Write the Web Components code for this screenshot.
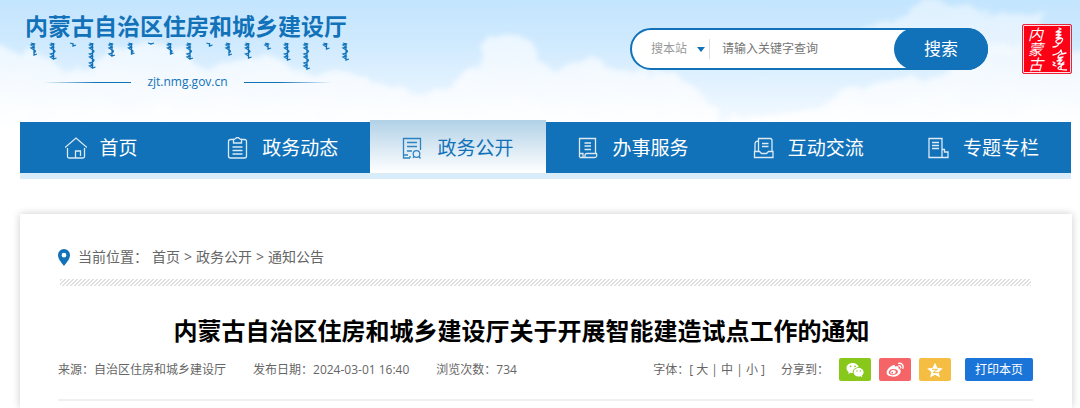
<!DOCTYPE html>
<html lang="zh-CN">
<head>
<meta charset="utf-8">
<meta name="viewport" content="width=device-width, initial-scale=1">
<title>内蒙古自治区住房和城乡建设厅</title>
<style>
  body {
    margin: 0;
    background: #fff;
    color: #666;
    font-family: "Open Sans", "Noto Sans CJK SC", sans-serif;
    font-size: 12px;
    line-height: 20px;
    --blue: #1172b9;
  }
</style>
</head>
<body>
<site-page>
  <site-header slot="header">
    <site-logo domain="zjt.nmg.gov.cn">内蒙古自治区住房和城乡建设厅</site-logo>
    <site-search></site-search>
    <site-seal></site-seal>
  </site-header>
  <site-nav slot="nav">
    <nav-item icon="home">首页</nav-item>
    <nav-item icon="clipboard">政务动态</nav-item>
    <nav-item icon="open" active>政务公开</nav-item>
    <nav-item icon="service">办事服务</nav-item>
    <nav-item icon="inbox">互动交流</nav-item>
    <nav-item icon="topic">专题专栏</nav-item>
  </site-nav>
  <article-card>
    <bread-crumb slot="crumb">
      <a href="#">首页</a>
      <a href="#">政务公开</a>
      <a href="#">通知公告</a>
    </bread-crumb>
    <span slot="title">内蒙古自治区住房和城乡建设厅关于开展智能建造试点工作的通知</span>
    <article-meta slot="meta" source="自治区住房和城乡建设厅" date="2024-03-01 16:40" views="734"></article-meta>
  </article-card>
</site-page>

<script>
// column heights of the vertical script band under the logo
const SCRIPT_BAND = [15, 19, 6, 28, 16, 14, 4, 14, 19, 6, 15, 18, 9, 20, 29, 9, 20];

const NAV_ICONS = {
  home: '<path d="M0 10.500 11 1l11 9.500"/><path d="M2.500 11v8.500q0 1.500 1.500 1.500h14q1.500 0 1.500-1.500V11"/><path d="M10.500 21v-7h5v5"/>',
  clipboard: '<path d="M7 2.500H3.500Q1.500 2.500 1.500 4.500v14.500q0 2 2 2h14q2 0 2-2V4.500q0-2-2-2H14"/><path d="M6.500 2.500q1.500 0 2-1 2-2 4 0 .5 1 2 1V6h-8zM5.500 10h10M5.500 13.500h10M5.500 17h10"/>',
  open: '<path d="M8 21H1.500V1.500h17V13"/><path d="M5 5.500h10M5 9.500h10M5 14h5M1.500 18H6"/><circle cx="14.500" cy="17" r="3.300"/><path d="M8 21v-2M17 19.500l1.500 2M12 19.500l-1 1.500"/>',
  service: '<path d="M1.500 20V1.500h16V16"/><path d="M6.500 6H13M6.500 9H13M6.500 12.500H13M1.500 16.500H5v4H1.500M5 20.500h11.500q3 0 2-4H9q-2 0-2 2v2"/>',
  inbox: '<path d="M5.500 14V1.500H17q2 0 2 2V14M5.500 4q-3.500 0-3.500 3V14"/><path d="M9 6.500h6.500M9 9.500h6.500M1.500 20.500v-6h5l2 2h5l2-2H20v6z"/>',
  topic: '<path d="M1 20.500v-19h13v19zM4 5.500h7M4 8.500h7M4 11.500h7M14 12.500h2.500V15h3.500v5.500h-6"/>'
};

const SHARE_ICONS = {
  wechat: '<path fill-rule="evenodd" d="M6.800 1C3 1 .5 3.200.5 6c0 1.600.8 3 2.200 3.900L2.200 12l2.300-1.200c.8.200 1.500.3 2.300.3C6.300 7.600 9 5.200 12.800 5.200 12.200 2.800 9.700 1 6.800 1zM4.600 3.500a.8.800 0 1 1 0 1.700.8.800 0 0 1 0-1.700zm4.400 0a.8.800 0 1 1 0 1.700.8.800 0 0 1 0-1.700z"/><path fill-rule="evenodd" d="M12.600 6c-3 0-5 1.900-5 4.200s2 4.300 5 4.300c.6 0 1.200-.1 1.800-.3l1.900 1-.5-1.700c1.100-.8 1.800-2 1.800-3.300 0-2.300-2.100-4.200-5-4.200zM11 8.200a.7.700 0 1 1 0 1.400.7.700 0 0 1 0-1.400zm3.400 0a.7.700 0 1 1 0 1.400.7.700 0 0 1 0-1.400z"/>',
  weibo: '<path fill-rule="evenodd" d="M7 3.200c1.200-.5 2.400-.3 2.100 1.600 2-.8 3.900-.6 3.300 1.400 4.600 1.500 2.300 8.300-5.100 8.500C3.200 14.800.6 13 .6 10.500.6 7.800 4 4.400 7 3.200zM7.300 7C4.500 7.100 2.700 8.700 2.800 10.500s2.100 2.800 4.700 2.600c2.700-.2 4.500-1.700 4.400-3.500C11.800 7.900 9.800 6.900 7.300 7z"/><path fill-rule="evenodd" d="M7.300 7.900c-1.800 0-3 1.200-3 2.500s1 2 2.500 1.900c1.800-.1 3-1.200 3-2.500 0-1.200-1-1.900-2.500-1.900zM6.200 9.800a.9.900 0 1 1 0 1.800.9.900 0 0 1 0-1.800z"/><path fill="none" stroke="currentColor" stroke-width="1.300" stroke-linecap="round" d="M12.600 1.300c3.200-.5 5.200 2 4.300 5M12.800 3.800c1.500-.2 2.300.8 1.900 2.200"/>',
  qzone: '<path d="M9 .8l2.300 5 5.500.6-4.100 3.700 1.200 5.400L9 12.700l-4.900 2.800 1.200-5.400L1.200 6.400l5.500-.6z"/><path fill="none" stroke="#f5bd42" stroke-width="1" d="M6 7.300h5.500L7 10.600h5.500"/>'
};

function define(name, html) {
  customElements.define(name, class extends HTMLElement {
    constructor() {
      super();
      this.attachShadow({ mode: 'open' });
    }

    connectedCallback() {
      this.shadowRoot.innerHTML = typeof html === 'function' ? html(this) : html;
    }
  });
}

define('site-page', `
  <style>
    :host { display: block; position: relative; }
    .sky { position: absolute; top: 0; left: 0; z-index: -1; width: 100%; height: 180px; }
    main { padding: 35px 8px 0 20px; }
  </style>
  <svg class="sky" viewBox="0 0 1080 180" preserveAspectRatio="none" aria-hidden="true">
    <defs>
      <linearGradient id="air" x2="0" y2="1">
        <stop offset="0" stop-color="#c3e5fe"/>
        <stop offset=".25" stop-color="#d0eafe"/>
        <stop offset=".55" stop-color="#e9f5ff"/>
        <stop offset=".8" stop-color="#fff"/>
      </linearGradient>
      <linearGradient id="cloud" gradientUnits="userSpaceOnUse" x1="0" x2="0" y1="0" y2="130">
        <stop offset="0" stop-color="#f2f9ff" stop-opacity=".7"/>
        <stop offset=".5" stop-color="#f5faff" stop-opacity=".85"/>
        <stop offset="1" stop-color="#fff"/>
      </linearGradient>
      <filter id="puff" x="-5%" y="-30%" width="110%" height="160%">
        <feTurbulence type="fractalNoise" baseFrequency=".035" numOctaves="4" seed="7"/>
        <feDisplacementMap in="SourceGraphic" scale="26" xChannelSelector="R" yChannelSelector="G"/>
        <feGaussianBlur stdDeviation="2.500"/>
      </filter>
    </defs>
    <rect width="1080" height="180" fill="url(#air)"/>
    <g fill="url(#cloud)" filter="url(#puff)">
      <path d="M-30 46Q10 42 40 56T90 66L120 48Q150 36 180 52T240 60Q270 54 290 70L345 72 380 85 440 90 478 62 490 40Q508 30 526 40L536 62 560 72Q590 48 612 68L660 76Q690 78 700 88L722 118 780 116 830 98Q880 76 950 72L990 44Q1030 36 1110 62V190H-30z"/>
      <path fill-opacity=".8" d="M862 32Q880 8 896 20L915 8Q950-4 975 10T1045 12L1030 40 985 60 870 50z"/>
    </g>
  </svg>
  <slot name="header"></slot>
  <slot name="nav"></slot>
  <main><slot></slot></main>
`);

define('site-header', `
  <style>
    :host {
      display: flex;
      align-items: flex-start;
      height: 122px;
      padding: 0 8px 0 25px;
      box-sizing: border-box;
    }
    ::slotted(site-logo) { margin: 10px auto 0 0; }
    ::slotted(site-search) { margin: 28px 34px 0 0; }
    ::slotted(site-seal) { margin-top: 24px; }
  </style>
  <slot></slot>
`);

function scriptColumn(x, height) {
  let d = `M${x - 2} 1l3 1`;
  let y = 2;
  for (let n = 0; y < height - 4; n++, y += 3) {
    d += n % 3 === 2 ? 'q3 1 0 3' : 'l-3 1 3 2';
  }
  return `<path d="${d}M${x + 1} 1V${height - 2}l3-1"/>`;
}

define('site-logo', el => `
  <style>
    :host { display: block; color: var(--blue); }
    a { display: block; color: inherit; text-decoration: none; }
    .name { font-size: 23px; line-height: 32px; font-weight: 700; white-space: nowrap; }
    .script { display: block; width: 325px; height: 30px; }
    .domain { display: flex; align-items: center; gap: 16px; padding: 0 18px; line-height: 20px; }
    .domain i { flex: 1; height: 1px; background: linear-gradient(90deg, transparent, var(--blue) 60%); }
    .domain i:last-child { background: linear-gradient(270deg, transparent, var(--blue) 60%); }
  </style>
  <a href="#">
    <div class="name"><slot></slot></div>
    <svg class="script" viewBox="0 0 325 30" fill="none" stroke="currentColor" stroke-width="1.300" aria-hidden="true">
      ${SCRIPT_BAND.map((h, i) => scriptColumn(8 + i * 19.5, h)).join('')}
    </svg>
    <div class="domain"><i></i><span>${el.getAttribute('domain')}</span><i></i></div>
  </a>
`);

define('site-search', `
  <style>
    :host { display: block; }
    form {
      display: flex;
      align-items: center;
      width: 358px;
      height: 42px;
      box-sizing: border-box;
      border: 2px solid var(--blue);
      border-radius: 21px;
      background: #fff;
      padding-left: 19px;
    }
    select, input, button { font: inherit; border: 0; padding: 0; margin: 0; background: none; outline: 0; }
    select { appearance: none; width: 46px; color: #999; }
    .arrow { border: 4px solid transparent; border-top: 5px solid var(--blue); border-bottom: 0; pointer-events: none; }
    input {
      flex: 1;
      min-width: 0;
      height: 20px;
      margin-left: 4px;
      padding-left: 12px;
      border-left: 1px solid #ddd;
      color: #666;
    }
    input::placeholder { color: #757575; opacity: 1; }
    button {
      width: 94px;
      height: 42px;
      margin-right: -2px;
      border-radius: 21px;
      background: var(--blue);
      color: #fff;
      font-size: 17px;
    }
  </style>
  <form onsubmit="return false">
    <select aria-label="搜索范围"><option>搜本站</option></select>
    <span class="arrow"></span>
    <input type="text" placeholder="请输入关键字查询" aria-label="关键字">
    <button type="submit">搜索</button>
  </form>
`);

define('site-seal', `
  <style>
    :host {
      display: flex;
      justify-content: space-around;
      align-items: center;
      width: 50px;
      height: 50px;
      box-sizing: border-box;
      border: 1px solid #f0213a;
      border-radius: 2px;
      background: #fe0016;
      box-shadow: inset 0 0 0 1px #ffe3e6;
      color: #fff;
    }
    span { writing-mode: vertical-rl; font-size: 15px; line-height: 16px; font-style: italic; }
    svg { width: 16px; height: 44px; }
  </style>
  <span>内蒙古</span>
  <svg viewBox="0 0 16 44" fill="none" stroke="currentColor" stroke-width="1.300" stroke-linecap="round" stroke-linejoin="round" aria-hidden="true">
    <path d="M8 1l2 1-5 3 5 0-5 3 5 0-5 3 5 0M8 3v9q-5 2-2 4t5-2-3-2M8 16q-1 4-6 4M2 28q6-1 8-5l1 4 4-1M10 27q-3 1-3 4l5-1-6 4 5-1-4 4 6 0-5 3q-4 3 8 3M2 35l2 1-2 2 3 1M13 35q-3 1-3 7"/>
  </svg>
`);

define('site-nav', `
  <style>
    :host { display: block; padding: 0 9px 0 20px; }
    nav { display: grid; grid-template-columns: repeat(6, 1fr); background: var(--blue); border-bottom: 6px solid #d9ecfa; }
  </style>
  <nav><slot></slot></nav>
`);

define('nav-item', el => `
  <style>
    :host { display: block; height: 51px; box-sizing: border-box; color: #fff; }
    :host([icon="home"]) { padding-right: 13px; }
    :host([active]) {
      margin-top: -2px;
      height: 53px;
      padding-top: 2px;
      background: linear-gradient(#b1d1e7, #fff);
      color: var(--blue);
    }
    a {
      display: flex;
      align-items: center;
      justify-content: center;
      gap: 13px;
      height: 100%;
      color: inherit;
      font-size: 19px;
      text-decoration: none;
      white-space: nowrap;
    }
    svg { width: 22px; height: 22px; opacity: .85; }
  </style>
  <a href="#">
    <svg viewBox="0 0 22 22" fill="none" stroke="currentColor" stroke-width="1.300" aria-hidden="true">${NAV_ICONS[el.getAttribute('icon')]}</svg>
    <slot></slot>
  </a>
`);

define('article-card', `
  <style>
    :host {
      display: block;
      padding: 32px 39px 7px 38px;
      background: #fff;
      box-shadow: 0 0 8px rgba(0, 0, 0, .2);
    }
    .hatch {
      height: 7px;
      margin: 11px 2px 0;
      background: linear-gradient(135deg, #e0e0e0 25%, #fff 25% 50%, #e0e0e0 50% 75%, #fff 75%) 0 0 / 4px 4px;
    }
    h1 {
      margin: 28px 0 0;
      padding-right: 48px;
      color: #000;
      font-size: 24px;
      line-height: 34px;
      text-align: center;
    }
  </style>
  <slot name="crumb"></slot>
  <div class="hatch"></div>
  <h1><slot name="title"></slot></h1>
  <slot name="meta"></slot>
`);

define('bread-crumb', el => {
  const links = [...el.querySelectorAll('a')];
  links.forEach((a, i) => { a.slot = 'link' + i; });
  return `
    <style>
      :host { display: block; font-size: 14px; line-height: 22px; }
      nav { display: flex; align-items: center; gap: 4px; }
      svg { width: 12px; height: 17px; margin-right: 4px; }
      ::slotted(a) { color: inherit; text-decoration: none; }
    </style>
    <nav aria-label="当前位置">
      <svg viewBox="0 0 12 17" aria-hidden="true"><path fill="var(--blue)" fill-rule="evenodd" d="M6 0a6 6 0 0 0-6 6c0 4 3 7 6 11 3-4 6-7 6-11a6 6 0 0 0-6-6zm0 3.800a2.400 2.400 0 1 1 0 4.800 2.400 2.400 0 0 1 0-4.800z"/></svg>
      <span>当前位置：</span>
      ${links.map((a, i) => `<slot name="link${i}"></slot>`).join('<span>&gt;</span>')}
    </nav>
  `;
});

define('share-link', el => `
  <style>
    :host { display: block; }
    a { display: flex; align-items: center; justify-content: center; width: 32px; height: 23px; border-radius: 2px; color: #fff; }
    svg { width: 18px; height: 16px; }
    .wechat { background: #88c81a; }
    .weibo { background: #f56467; }
    .qzone { background: #f5bd42; }
  </style>
  <a href="#" class="${el.getAttribute('to')}" aria-label="${el.getAttribute('to')}">
    <svg viewBox="0 0 18 16" fill="currentColor" aria-hidden="true">${SHARE_ICONS[el.getAttribute('to')]}</svg>
  </a>
`);

define('article-meta', el => `
  <style>
    :host { display: block; border-bottom: 2px solid #f0f0f0; padding: 8px 0 16px; }
    .row, .tools { display: flex; align-items: center; }
    .row { height: 27px; gap: 27px; white-space: nowrap; }
    .tools { margin-left: auto; gap: 8px; }
    .share { margin: 0 2px 0 8px; }
    .print {
      width: 68px;
      height: 23px;
      margin-left: 6px;
      padding: 0;
      border: 0;
      border-radius: 2px;
      background: #1b75d8;
      color: #fff;
      font: inherit;
    }
    a { color: inherit; text-decoration: none; }
  </style>
  <div class="row">
    <span>来源：${el.getAttribute('source')}</span>
    <span>发布日期：${el.getAttribute('date')}</span>
    <span>浏览次数：${el.getAttribute('views')}</span>
    <div class="tools">
      <span>字体：[ <a href="#">大</a> | <a href="#">中</a> | <a href="#">小</a> ]</span>
      <span class="share">分享到：</span>
      <share-link to="wechat"></share-link>
      <share-link to="weibo"></share-link>
      <share-link to="qzone"></share-link>
      <button type="button" class="print">打印本页</button>
    </div>
  </div>
`);
</script>
</body>
</html>
